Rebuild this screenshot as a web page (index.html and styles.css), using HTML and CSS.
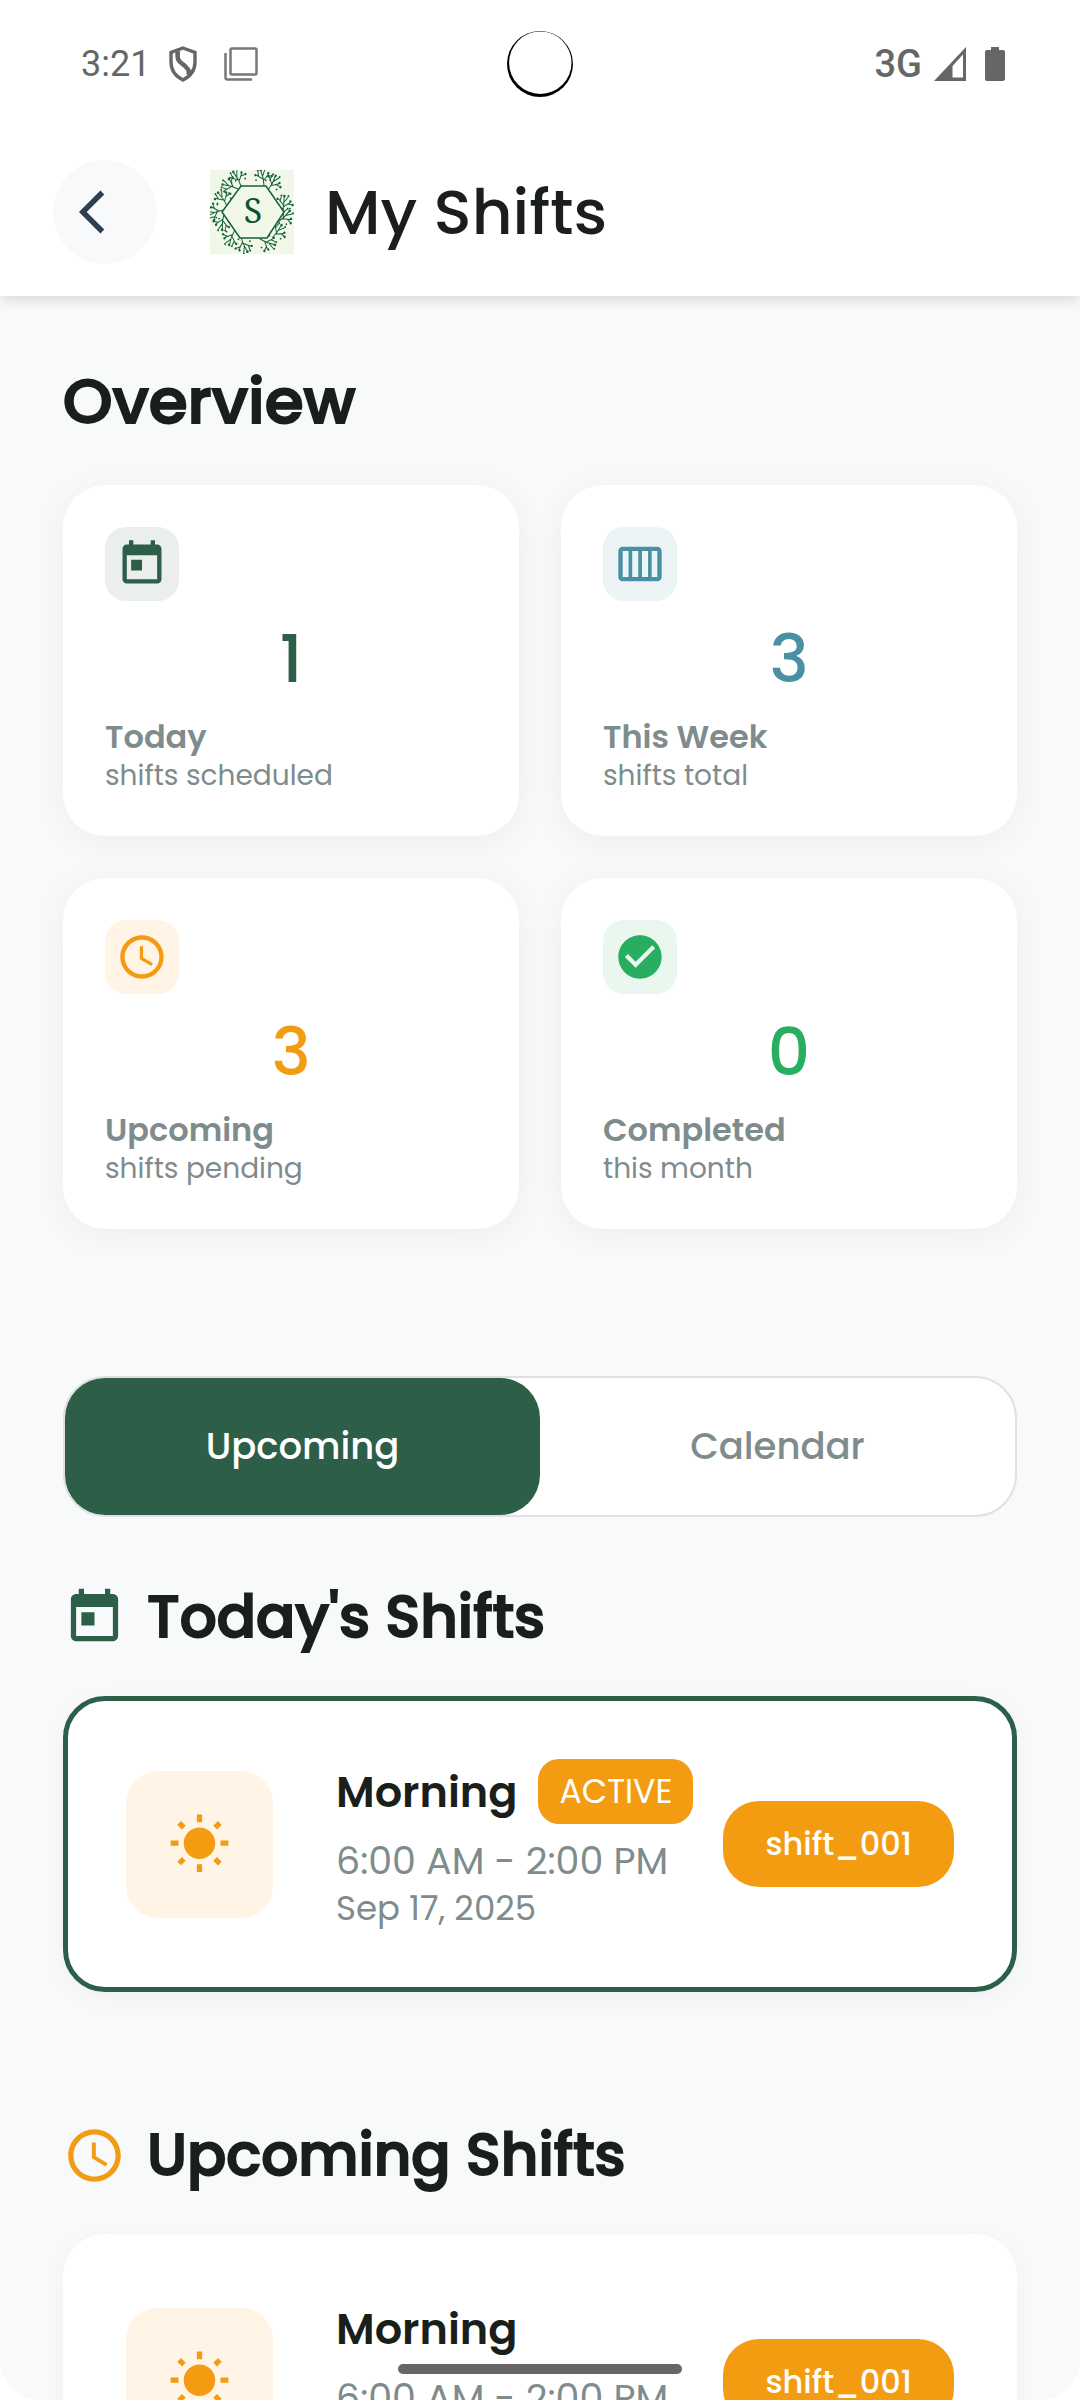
FILE: index.html
```html
<!DOCTYPE html>
<html lang="en">
<head>
<meta charset="utf-8">
<meta name="viewport" content="width=device-width, initial-scale=1">
<title>My Shifts</title>
<link rel="stylesheet" href="styles.css">
</head>
<body>
<svg class="defs" aria-hidden="true">
  <symbol id="i-today" viewBox="0 0 24 24"><path d="M19 3h-1V1h-2v2H8V1H6v2H5c-1.11 0-1.99.9-1.99 2L3 19c0 1.1.89 2 2 2h14c1.1 0 2-.9 2-2V5c0-1.1-.9-2-2-2zm0 16H5V8h14v11zM7 10h5v5H7z"/></symbol>
  <symbol id="i-week" viewBox="0 0 24 24"><path fill-rule="evenodd" d="M20 4H4c-1.1 0-2 .9-2 2v12c0 1.1.9 2 2 2h16c1.1 0 2-.9 2-2V6c0-1.1-.9-2-2-2zM4 6h2.700v12H4zM8.400 6h2.800v12H8.400zM12.900 6h2.800v12h-2.800zM17.400 6H20v12h-2.600z"/></symbol>
  <symbol id="i-clock" viewBox="0 0 24 24"><path d="M11.990 2C6.470 2 2 6.480 2 12s4.470 10 9.990 10C17.520 22 22 17.520 22 12S17.520 2 11.990 2zM12 20c-4.420 0-8-3.580-8-8s3.580-8 8-8 8 3.580 8 8-3.580 8-8 8zm.5-13H11v6l5.250 3.150.75-1.230-4.500-2.670z"/></symbol>
  <symbol id="i-check" viewBox="0 0 24 24"><path d="M12 2C6.480 2 2 6.480 2 12s4.480 10 10 10 10-4.480 10-10S17.520 2 12 2zm-2 15l-5-5 1.410-1.410L10 14.170l7.590-7.590L19 8l-9 9z"/></symbol>
  <symbol id="i-sun" viewBox="0 0 24 24"><path d="M6.760 4.840l-1.800-1.790-1.410 1.410 1.790 1.790 1.420-1.410zM4 10.500H1v2h3v-2zm9-9.950h-2V3.500h2V.55zm7.450 3.910l-1.410-1.410-1.790 1.790 1.410 1.410 1.790-1.790zm-3.210 13.700l1.790 1.800 1.410-1.410-1.800-1.790-1.400 1.400zM20 10.500v2h3v-2h-3zm-8-5c-3.310 0-6 2.690-6 6s2.690 6 6 6 6-2.690 6-6-2.690-6-6-6zm-1 16.950h2V19.500h-2v2.950zm-7.450-3.910l1.410 1.410 1.790-1.800-1.410-1.410-1.790 1.800z"/></symbol>
  <symbol id="sprig" viewBox="-10 -20 20 22" overflow="visible">
    <path d="M0 0Q1-7-1-15M0-5L6-11M0-7L-6-12M0-10L3-16M4-9L8-9M-4-10L-4-15" fill="none" stroke="#14603a" stroke-width="1"/>
    <g fill="#14603a"><circle cx="-1" cy="-16" r="1.300"/><circle cx="6" cy="-12" r="1.200"/><circle cx="-7" cy="-12" r="1.200"/><circle cx="3" cy="-17" r="1"/><circle cx="9" cy="-9" r="1.200"/><circle cx="-4" cy="-16" r="1"/><circle cx="7" cy="-5" r=".9"/><circle cx="-7" cy="-7" r=".9"/></g>
  </symbol>
</svg>

<div class="app">
  <div class="status">
    <div class="status-group">
      <span class="clock">3:21</span>
      <svg class="shield" viewBox="0 0 30 36" aria-hidden="true"><path d="M15 2L27 6.500V16C27 24 22 30.500 15 34 8 30.500 3 24 3 16V6.500Z" fill="none" stroke="#666" stroke-width="3.400"/><path d="M10 5C8 16 13 16 17 20 21 24 22 26 20 29" fill="none" stroke="#666" stroke-width="4.500"/></svg>
      <svg class="windows" viewBox="0 0 34 34" aria-hidden="true"><g fill="none" stroke="#777" stroke-width="2.500"><rect x="6.500" y="1.500" width="26" height="26" rx="1.500"/><path d="M1.500 6V30.500Q1.500 32.500 3.500 32.500H28"/></g></svg>
    </div>
    <svg class="camera" viewBox="0 0 66 66" aria-hidden="true"><circle cx="33" cy="33" r="33"/><circle cx="33.300" cy="31.700" r="31.200" fill="#fff"/></svg>
    <div class="status-group end">
      <span class="network">3G</span>
      <svg class="signal" viewBox="0 0 32 34" aria-hidden="true"><path fill-rule="evenodd" d="M32 0V34H0ZM29 7.500L18.500 19V30.500H29Z"/></svg>
      <svg class="battery" viewBox="0 0 20 34" aria-hidden="true"><path d="M6 0h8v3h4q2 0 2 2v27q0 2-2 2H2q-2 0-2-2V5q0-2 2-2h4z"/></svg>
    </div>
  </div>

  <header class="topbar">
    <button class="back" type="button" aria-label="Back"><svg class="icon-md" viewBox="0 0 24 24" aria-hidden="true"><path d="M11.670 3.870L9.900 2.100 0 12l9.900 9.900 1.770-1.770L3.540 12z"/></svg></button>
    <svg class="logo" viewBox="0 0 84 84" role="img" aria-label="S logo">
      <rect width="84" height="84" fill="#f2f8e8"/>
      <use href="#sprig" x="-10" y="-20" width="20" height="22" transform="translate(31 16) rotate(-25)"/>
      <use href="#sprig" x="-10" y="-20" width="20" height="22" transform="translate(28 19) rotate(-70)"/>
      <use href="#sprig" x="-10" y="-20" width="20" height="22" transform="translate(54 16) rotate(-8)"/>
      <use href="#sprig" x="-10" y="-20" width="20" height="22" transform="translate(58 20) rotate(32)"/>
      <use href="#sprig" x="-10" y="-20" width="20" height="22" transform="translate(72 42) rotate(12)"/>
      <use href="#sprig" x="-10" y="-20" width="20" height="22" transform="translate(68 52) rotate(50)"/>
      <use href="#sprig" x="-10" y="-20" width="20" height="22" transform="translate(62 68) rotate(40)"/>
      <use href="#sprig" x="-10" y="-20" width="20" height="22" transform="translate(50 69) rotate(115)"/>
      <use href="#sprig" x="-10" y="-20" width="20" height="22" transform="translate(31 67) rotate(160)"/>
      <use href="#sprig" x="-10" y="-20" width="20" height="22" transform="translate(25 60) rotate(205)"/>
      <use href="#sprig" x="-10" y="-20" width="20" height="22" transform="translate(14 44) rotate(190)"/>
      <use href="#sprig" x="-10" y="-20" width="20" height="22" transform="translate(14 40) rotate(255)"/>
      <use href="#sprig" x="-10" y="-20" width="20" height="22" transform="translate(17 36) rotate(-30)"/>
      <path d="M31 16H56L74 42 57 68H30L12 42Z" fill="#f2f8e8" stroke="#14603a" stroke-width="1.500"/>
      <text x="43" y="53" text-anchor="middle" class="logo-letter">S</text>
    </svg>
    <h1 class="title">My Shifts</h1>
  </header>

  <main class="content">
    <h2 class="heading large">Overview</h2>
    <section class="stats">
      <article class="stat green">
        <span class="stat-icon"><svg class="icon-md"><use href="#i-today"/></svg></span>
        <p class="stat-value">1</p>
        <h3 class="stat-label">Today</h3>
        <p class="stat-note">shifts scheduled</p>
      </article>
      <article class="stat blue">
        <span class="stat-icon"><svg class="icon-md"><use href="#i-week"/></svg></span>
        <p class="stat-value">3</p>
        <h3 class="stat-label">This Week</h3>
        <p class="stat-note">shifts total</p>
      </article>
      <article class="stat orange">
        <span class="stat-icon"><svg class="icon-md"><use href="#i-clock"/></svg></span>
        <p class="stat-value">3</p>
        <h3 class="stat-label">Upcoming</h3>
        <p class="stat-note">shifts pending</p>
      </article>
      <article class="stat success">
        <span class="stat-icon"><svg class="icon-md"><use href="#i-check"/></svg></span>
        <p class="stat-value">0</p>
        <h3 class="stat-label">Completed</h3>
        <p class="stat-note">this month</p>
      </article>
    </section>

    <div class="tabs" role="tablist">
      <button class="tab selected" type="button" role="tab" aria-selected="true">Upcoming</button>
      <button class="tab" type="button" role="tab" aria-selected="false">Calendar</button>
    </div>

    <section class="group">
      <h2 class="heading with-icon"><svg class="icon-lg green"><use href="#i-today"/></svg>Today's Shifts</h2>
      <article class="shift current">
        <span class="shift-icon"><svg class="icon-lg"><use href="#i-sun"/></svg></span>
        <div class="shift-info">
          <div class="shift-top"><h3 class="shift-name">Morning</h3><span class="badge">ACTIVE</span></div>
          <p class="shift-time">6:00 AM - 2:00 PM</p>
          <p class="shift-date">Sep 17, 2025</p>
        </div>
        <span class="shift-id">shift_001</span>
      </article>
    </section>

    <section class="group">
      <h2 class="heading with-icon"><svg class="icon-lg orange"><use href="#i-clock"/></svg>Upcoming Shifts</h2>
      <article class="shift">
        <span class="shift-icon"><svg class="icon-lg"><use href="#i-sun"/></svg></span>
        <div class="shift-info">
          <div class="shift-top"><h3 class="shift-name">Morning</h3></div>
          <p class="shift-time">6:00 AM - 2:00 PM</p>
          <p class="shift-date">Sep 18, 2025</p>
        </div>
        <span class="shift-id">shift_001</span>
      </article>
    </section>
  </main>
  <div class="home-bar"></div>
</div>
</body>
</html>
```
FILE: styles.css
```css
* { box-sizing: border-box; margin: 0; }

body {
  background: #fff;
  color: #1a1f1b;
  font-family: Poppins, Inter, "Liberation Sans", sans-serif;
}

button { border: 0; padding: 0; font: inherit; }
svg { display: block; fill: currentColor; flex: none; }

.defs { position: absolute; width: 0; height: 0; }
.icon-md { width: 52px; height: 52px; }
.icon-lg { width: 63px; height: 63px; }

.green { --tone: #2d5f48; --tint: #eaefed; }
.blue { --tone: #4a90a4; --tint: #ecf4f6; }
.orange { --tone: #f39c12; --tint: #fff4e6; }
.success { --tone: #27ae60; --tint: #e9f7ef; }

.app {
  position: relative;
  display: flex;
  flex-direction: column;
  height: 100vh;
  overflow: hidden;
}

/* Status bar */
.status {
  display: grid;
  grid-template-columns: 1fr auto 1fr;
  align-items: center;
  height: 128px;
  padding: 0 75px;
  color: #666;
  font-family: Roboto, sans-serif;
}
.status-group { display: flex; align-items: center; }
.end { justify-content: flex-end; }
.clock { margin: 0 18px 0 6px; font-size: 36px; }
.shield { width: 30px; height: 36px; margin-right: 26px; }
.windows { width: 34px; height: 34px; }
.camera { width: 66px; height: 66px; fill: #000; }
.network { margin-right: 12px; font-size: 38px; font-weight: 500; }
.signal { width: 32px; height: 34px; margin-right: 19px; }
.battery { width: 20px; height: 34px; }

/* Title bar */
.topbar {
  position: relative;
  z-index: 1;
  display: flex;
  align-items: center;
  height: 168px;
  padding: 0 53px;
  background: #fff;
  box-shadow: 0 8px 10px -2px rgba(0, 0, 0, .1);
}
.back {
  display: grid;
  place-items: center;
  width: 104px;
  height: 104px;
  margin-right: 53px;
  border-radius: 50%;
  background: #f8f9fb;
  color: #2c3e50;
}
.logo { width: 84px; height: 84px; margin-right: 31px; }
.logo-letter { font: 34px "Noto Serif", "Liberation Serif", serif; fill: #07552c; }
.title { font-size: 63px; font-weight: 500; }

/* Scrolling content */
.content {
  flex: 1;
  min-height: 0;
  padding: 63px 63px 0;
  overflow-y: auto;
  scrollbar-width: none;
  background: #f8f9fb;
  border-radius: 0 0 40px 40px;
}
.heading {
  font-size: 58px;
  font-weight: 500;
  line-height: 84px;
  -webkit-text-stroke: 2px currentColor;
}
.large { font-size: 63px; }
.with-icon { display: flex; align-items: center; gap: 21px; margin-bottom: 37px; }
.with-icon svg { color: var(--tone); }

.stats {
  display: grid;
  grid-template-columns: 1fr 1fr;
  gap: 42px;
  margin: 42px 0 147px;
}
.stat {
  padding: 42px;
  border-radius: 42px;
  background: #fff;
  box-shadow: 0 5px 32px rgba(0, 0, 0, .05);
  color: #7f8c8d;
}
.stat-icon {
  display: grid;
  place-items: center;
  width: 74px;
  height: 74px;
  border-radius: 21px;
  background: var(--tint);
  color: var(--tone);
}
.stat-value {
  margin: 18px 0 17px;
  color: var(--tone);
  font-size: 66px;
  font-weight: 500;
  line-height: 80px;
  text-align: center;
}
.stat-label { font-size: 32px; font-weight: 600; line-height: 42px; }
.stat-note { font-size: 28px; line-height: 36px; }

.tabs {
  display: flex;
  border: 2px solid #e0e0e0;
  border-radius: 42px;
  background: #fff;
}
.tab {
  flex: 1;
  padding: 42px 0;
  border-radius: 40px;
  background: none;
  color: #7f8c8d;
  font-size: 37px;
  font-weight: 500;
  line-height: 53px;
}
.selected { background: #2d5f48; color: #fff; }

.group { margin: 58px 0 121px; }
.shift {
  display: flex;
  align-items: center;
  padding: 63px;
  border-radius: 42px;
  background: #fff;
  box-shadow: 0 5px 21px rgba(0, 0, 0, .04);
}
.current { padding: 58px; border: 5px solid #2d5f48; }
.shift-icon {
  display: grid;
  place-items: center;
  width: 147px;
  height: 147px;
  margin-right: 63px;
  border-radius: 32px;
  background: #fff4e6;
  color: #f39c12;
}
.shift-info { flex: 1; white-space: nowrap; }
.shift-top { display: flex; align-items: center; gap: 21px; }
.shift-name { font-size: 43px; font-weight: 600; line-height: 64px; }
.badge {
  padding: 0 21px;
  border-radius: 21px;
  background: #f39c12;
  color: #fff;
  font-size: 33px;
  line-height: 65px;
}
.shift-time { margin-top: 10px; color: #7f8c8d; font-size: 38px; line-height: 53px; }
.shift-date { color: #7f8c8d; font-size: 34px; line-height: 42px; }
.shift-id {
  padding: 0 42px;
  border-radius: 36px;
  background: #f39c12;
  color: #fff;
  font-size: 32px;
  font-weight: 500;
  line-height: 86px;
}

/* System gesture bar */
.home-bar {
  position: absolute;
  bottom: 26px;
  left: 0;
  right: 0;
  width: 284px;
  height: 10px;
  margin: 0 auto;
  border-radius: 5px;
  background: #666;
}
```
